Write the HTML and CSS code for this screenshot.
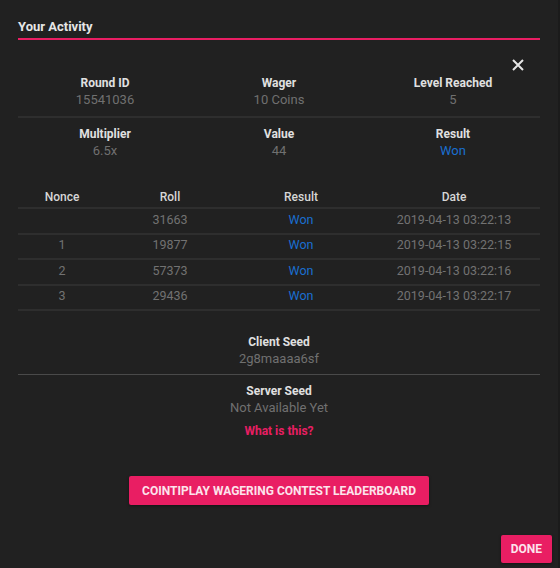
FILE: index.html
```html
<!DOCTYPE html>
<html lang="en">
<head>
  <meta charset="UTF-8" />
  <meta name="viewport" content="width=device-width, initial-scale=1.0" />
  <title>Your Activity</title>
  <link rel="stylesheet" href="styles.css">
</head>
<body>
  <div class="dialog">
    <div class="content">
      <h2 class="title">Your Activity</h2>

      <button class="close" aria-label="Close">
        <svg width="12" height="12" viewBox="0 0 12 12">
          <path d="M1 1 L11 11 M11 1 L1 11" stroke="#e6e6e6" stroke-width="2" />
        </svg>
      </button>

      <div class="stats">
        <div class="stat">
          <div class="label">Round ID</div>
          <div class="value">15541036</div>
        </div>
        <div class="stat">
          <div class="label">Wager</div>
          <div class="value">10 Coins</div>
        </div>
        <div class="stat">
          <div class="label">Level Reached</div>
          <div class="value">5</div>
        </div>
      </div>
      <div class="stats second">
        <div class="stat">
          <div class="label">Multiplier</div>
          <div class="value">6.5x</div>
        </div>
        <div class="stat">
          <div class="label">Value</div>
          <div class="value">44</div>
        </div>
        <div class="stat">
          <div class="label">Result</div>
          <div class="value won">Won</div>
        </div>
      </div>

      <table class="rolls">
        <thead>
          <tr>
            <th class="c-nonce">Nonce</th>
            <th class="c-roll">Roll</th>
            <th class="c-result">Result</th>
            <th class="c-date">Date</th>
          </tr>
        </thead>
        <tbody>
          <tr><td></td><td>31663</td><td class="won">Won</td><td>2019-04-13 03:22:13</td></tr>
          <tr><td>1</td><td>19877</td><td class="won">Won</td><td>2019-04-13 03:22:15</td></tr>
          <tr><td>2</td><td>57373</td><td class="won">Won</td><td>2019-04-13 03:22:16</td></tr>
          <tr><td>3</td><td>29436</td><td class="won">Won</td><td>2019-04-13 03:22:17</td></tr>
        </tbody>
      </table>

      <div class="seed first">
        <div class="label">Client Seed</div>
        <div class="value">2g8maaaa6sf</div>
      </div>
      <div class="seed">
        <div class="label">Server Seed</div>
        <div class="value">Not Available Yet</div>
        <a class="what" href="#">What is this?</a>
      </div>

      <div class="center">
        <button class="btn">Cointiplay Wagering Contest Leaderboard</button>
      </div>
    </div>

    <div class="actions">
      <button class="btn done">Done</button>
    </div>
  </div>
</body>
</html>
```

FILE: styles.css
```css
body {
  margin: 0;
  background: #1b1b1b;
  font-family: Roboto, 'Liberation Sans', sans-serif;
  color: #e0e0e0;
}
.dialog {
  width: 558px;
  height: 568px;
  background: #212121;
  position: relative;
}
.content {
  padding: 0 18px;
}
.title {
  margin: 0;
  padding: 19px 0 3px;
  font-size: 13px;
  line-height: 16px;
  font-weight: 700;
  color: #e6e6e6;
  border-bottom: 2px solid #e91e63;
}
.close {
  position: absolute;
  top: 59px;
  left: 512px;
  padding: 0;
  background: none;
  border: none;
  cursor: pointer;
  line-height: 0;
}
.stats {
  display: grid;
  grid-template-columns: repeat(3, 1fr);
  text-align: center;
  padding: 35px 0 8px;
  border-bottom: 2px solid #2e2e2e;
}
.stats.second {
  padding: 8px 0 0;
  border-bottom: none;
}
.label {
  font-size: 12px;
  line-height: 16px;
  font-weight: 700;
  color: #e0e0e0;
}
.value {
  font-size: 13px;
  line-height: 17px;
  color: #707070;
}
.won {
  color: #1a6fd0;
}
.rolls {
  width: 100%;
  margin-top: 26px;
  border-collapse: collapse;
  font-size: 12px;
  text-align: center;
}
.rolls th {
  font-weight: 500;
  color: #d6d6d6;
  line-height: 16px;
  padding: 4px 0 2px;
  border-bottom: 2px solid #2e2e2e;
}
.rolls td {
  font-size: 12.5px;
  line-height: 16px;
  color: #727272;
  padding: 2.5px 0 5px;
  border-bottom: 2px solid #2e2e2e;
}
.rolls td.won {
  color: #1a6fd0;
}
.c-nonce { width: 88px; }
.c-roll { width: 128px; }
.c-result { width: 134px; }
.seed {
  text-align: center;
  padding-top: 8px;
}
.seed.first {
  margin-top: 23px;
  padding: 0 0 7px;
  border-bottom: 1px solid #4a4a4a;
}
.what {
  display: block;
  margin-top: 7px;
  font-size: 12px;
  line-height: 16px;
  font-weight: 700;
  color: #e91e63;
  text-decoration: none;
}
.center {
  text-align: center;
  margin-top: 37px;
}
.btn {
  background: #e91e63;
  color: #fce4ec;
  border: none;
  border-radius: 2px;
  font-family: Roboto, 'Liberation Sans', sans-serif;
  font-size: 12px;
  font-weight: 700;
  text-transform: uppercase;
  height: 29px;
  padding: 0 13px;
  box-shadow: 0 1px 3px rgba(0,0,0,0.4);
  cursor: pointer;
}
.actions {
  display: flex;
  justify-content: flex-end;
  padding: 30px 6px 0;
}
.done {
  height: 28px;
  padding: 0 10px;
}
```
